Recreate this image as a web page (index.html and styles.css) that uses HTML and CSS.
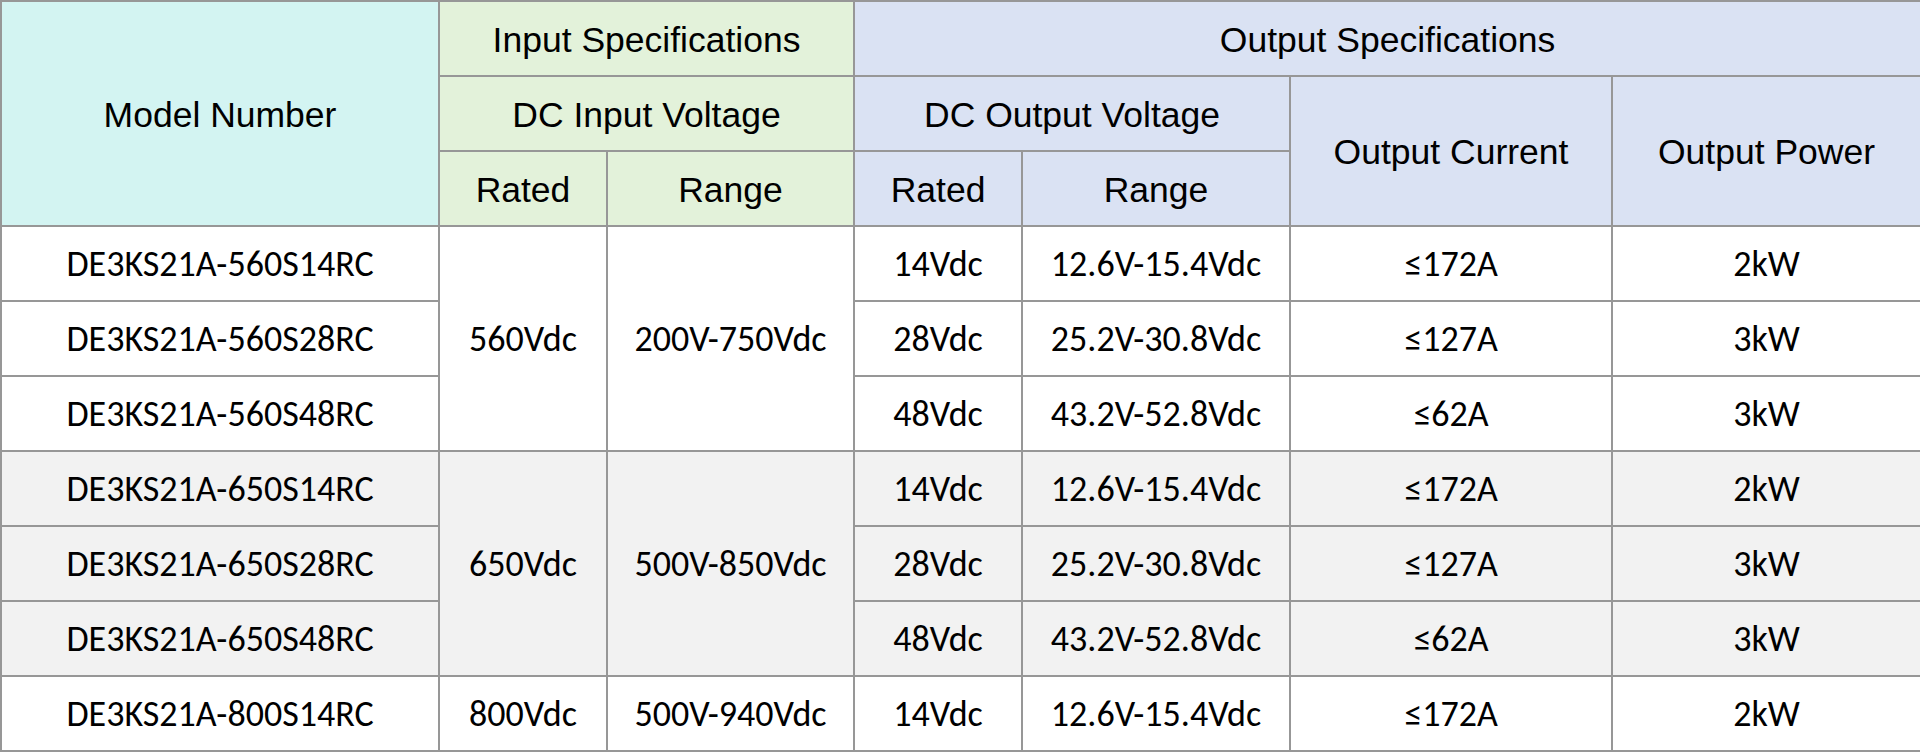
FILE: index.html
```html
<!DOCTYPE html>
<html>
<head>
<meta charset="utf-8">
<link rel="stylesheet" href="styles.css">
</head>
<body>
<table class="spec">
  <colgroup>
    <col class="c-model">
    <col class="c-inrated">
    <col class="c-inrange">
    <col class="c-outrated">
    <col class="c-outrange">
    <col class="c-current">
    <col class="c-power">
  </colgroup>
  <thead>
    <tr>
      <th class="h-model" rowspan="3">Model Number</th>
      <th class="h-in" colspan="2">Input Specifications</th>
      <th class="h-out" colspan="4">Output Specifications</th>
    </tr>
    <tr>
      <th class="h-in" colspan="2">DC Input Voltage</th>
      <th class="h-out" colspan="2">DC Output Voltage</th>
      <th class="h-out" rowspan="2">Output Current</th>
      <th class="h-out" rowspan="2">Output Power</th>
    </tr>
    <tr>
      <th class="h-in">Rated</th>
      <th class="h-in">Range</th>
      <th class="h-out">Rated</th>
      <th class="h-out">Range</th>
    </tr>
  </thead>
  <tbody>
    <tr class="row-a">
      <td>DE3KS21A-560S14RC</td>
      <td rowspan="3">560Vdc</td>
      <td rowspan="3">200V-750Vdc</td>
      <td>14Vdc</td>
      <td>12.6V-15.4Vdc</td>
      <td>≤172A</td>
      <td>2kW</td>
    </tr>
    <tr class="row-a">
      <td>DE3KS21A-560S28RC</td>
      <td>28Vdc</td>
      <td>25.2V-30.8Vdc</td>
      <td>≤127A</td>
      <td>3kW</td>
    </tr>
    <tr class="row-a">
      <td>DE3KS21A-560S48RC</td>
      <td>48Vdc</td>
      <td>43.2V-52.8Vdc</td>
      <td>≤62A</td>
      <td>3kW</td>
    </tr>
    <tr class="row-b">
      <td>DE3KS21A-650S14RC</td>
      <td rowspan="3">650Vdc</td>
      <td rowspan="3">500V-850Vdc</td>
      <td>14Vdc</td>
      <td>12.6V-15.4Vdc</td>
      <td>≤172A</td>
      <td>2kW</td>
    </tr>
    <tr class="row-b">
      <td>DE3KS21A-650S28RC</td>
      <td>28Vdc</td>
      <td>25.2V-30.8Vdc</td>
      <td>≤127A</td>
      <td>3kW</td>
    </tr>
    <tr class="row-b">
      <td>DE3KS21A-650S48RC</td>
      <td>48Vdc</td>
      <td>43.2V-52.8Vdc</td>
      <td>≤62A</td>
      <td>3kW</td>
    </tr>
    <tr class="row-a">
      <td>DE3KS21A-800S14RC</td>
      <td>800Vdc</td>
      <td>500V-940Vdc</td>
      <td>14Vdc</td>
      <td>12.6V-15.4Vdc</td>
      <td>≤172A</td>
      <td>2kW</td>
    </tr>
  </tbody>
</table>
</body>
</html>
```

FILE: styles.css
```css
html, body {
  margin: 0;
  padding: 0;
  background: #ffffff;
}

.spec {
  width: 1920px;
  border-collapse: collapse;
  table-layout: fixed;
  color: #000000;
}

.c-model { width: 438px; }
.c-inrated { width: 168px; }
.c-inrange { width: 247px; }
.c-outrated { width: 168px; }
.c-outrange { width: 268px; }
.c-current { width: 322px; }
.c-power { width: 309px; }

.spec th,
.spec td {
  border: 2px solid #979797;
  padding: 0;
  text-align: center;
  vertical-align: middle;
  white-space: nowrap;
}

.spec tr {
  height: 75px;
}

.spec th {
  font-family: "Liberation Sans", Arial, sans-serif;
  font-weight: normal;
  font-size: 35.5px;
  padding-top: 3px;
}

.spec td {
  font-family: Carlito, Calibri, Lato, sans-serif;
  font-size: 36px;
}

.h-model { background: #d3f4f2; }
.h-in { background: #e3f2da; }
.h-out { background: #dae2f3; }

.row-a td { background: #ffffff; }
.row-b td { background: #f2f2f2; }
```
